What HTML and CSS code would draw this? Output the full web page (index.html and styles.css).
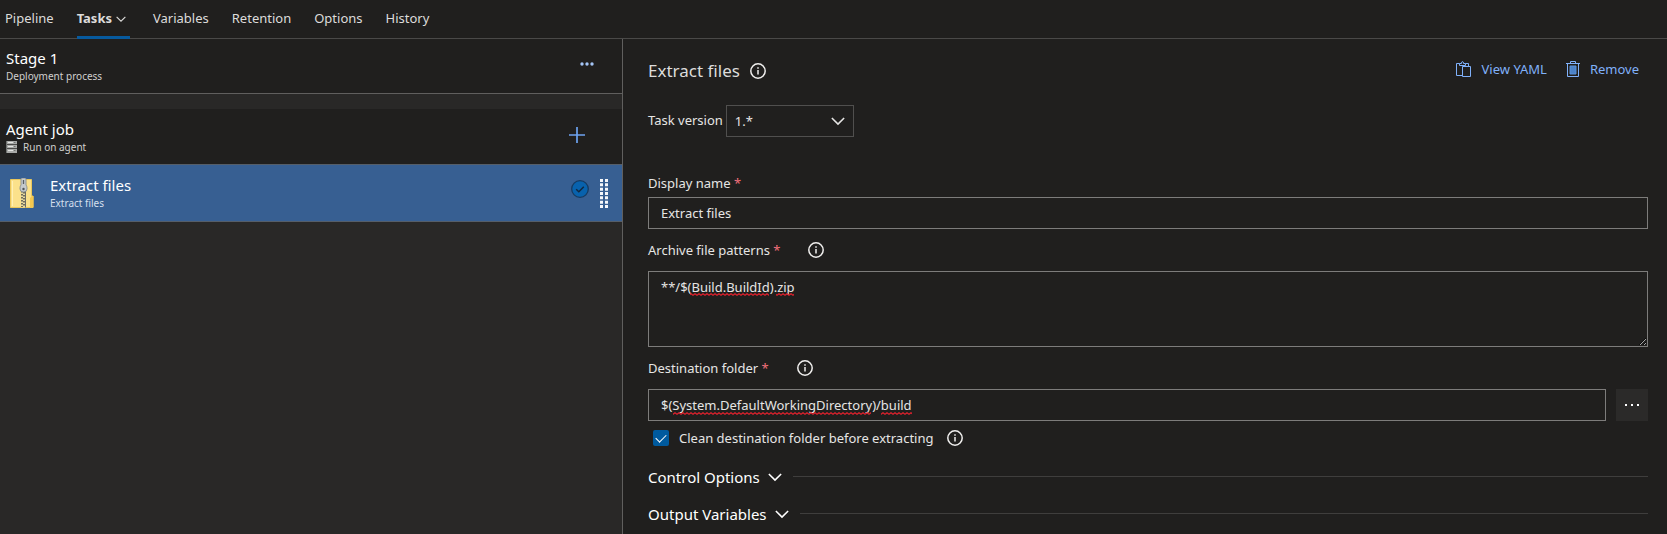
FILE: index.html
```html
<!DOCTYPE html>
<html lang="en">
<head>
<meta charset="utf-8">
<title>Release pipeline - Tasks</title>
<link rel="stylesheet" href="styles.css">
</head>
<body>
<svg class="defs" width="0" height="0" aria-hidden="true">
  <defs>
    <symbol id="chevron" viewBox="0 0 16 16"><path d="M1 4.500 8 11.500l7-7" fill="none" stroke="currentColor" stroke-width="1.8"/></symbol>
    <symbol id="info" viewBox="0 0 16 16"><circle cx="8" cy="8" r="7.2" fill="none" stroke="currentColor" stroke-width="1.5"/><path d="M8 7v4.6M8 4.3v1.5" fill="none" stroke="currentColor" stroke-width="1.5"/></symbol>
    <pattern id="wave" width="4" height="3" patternUnits="userSpaceOnUse"><path d="M-1 1.5 0 2.3 2 .7 4 2.3 5 1.5" fill="none" stroke="#e0202c" stroke-width="1.1"/></pattern>
  </defs>
</svg>
<nav class="tabs">
  <a class="tab" href="#pipeline">Pipeline</a>
  <a class="tab tab-active" href="#tasks">Tasks <svg class="tab-chevron"><use href="#chevron"/></svg></a>
  <a class="tab" href="#variables">Variables</a>
  <a class="tab" href="#retention">Retention</a>
  <a class="tab" href="#options">Options</a>
  <a class="tab" href="#history">History</a>
</nav>
<main class="workspace">
  <section class="process">
    <div class="row stage">
      <div class="row-text"><div class="row-title">Stage 1</div><div class="row-sub">Deployment process</div></div>
      <button class="icon-button more" aria-label="More actions"><svg width="14" height="4" viewBox="0 0 14 4"><g fill="#a3c4f5"><circle cx="2" cy="2" r="1.7"/><circle cx="7" cy="2" r="1.7"/><circle cx="12" cy="2" r="1.7"/></g></svg></button>
    </div>
    <div class="row job">
      <div class="row-text"><div class="row-title">Agent job</div>
        <div class="row-sub"><svg width="11" height="12" viewBox="0 0 11 12"><path d="M0 0h11v12H0z" fill="#a9aaa8"/><path d="M0 3.5h11M0 7.5h11" stroke="#4b4b49"/><path d="M2 1.5h5M2 5.5h5M2 9.5h5" stroke="#e4e5e3"/><path d="M8 1.5h1.5M8 5.5h1.5M8 9.5h1.5M.5 0v12" stroke="#707371"/></svg>Run on agent</div></div>
      <button class="icon-button add" aria-label="Add a task"><svg width="16" height="16" viewBox="0 0 16 16"><path d="M0 8h16M8 0v16" stroke="#6da3f0" stroke-width="1.7"/></svg></button>
    </div>
    <div class="row task">
      <svg class="zip" width="24" height="30" viewBox="0 0 24 30">
        <path d="M.5 1.5h21V18H23v11.500H.5z" fill="#fbe18b" stroke="#e9c65b"/>
        <path d="M2 3h1v25H2z" fill="#fff0b5"/><path d="M20 29V20l2-2h1.500v11.500z" fill="#f5c84f"/>
        <path d="M11 12h5v17.500h-5z" fill="#e8d9a0"/>
        <path d="M12 13v16M14 14v15" stroke="#5d5c50" stroke-width="1.7" stroke-dasharray="1.5 1.5"/><path d="M15.500 12.500v17" stroke="#6b6c67"/>
        <path d="M11 1q0-1 1-1h3q1 0 1 1v6q1 1 1 3v1q0 3-3.500 3T10 11v-1q0-2 1-3z" fill="#c5cacd" stroke="#7d8589" stroke-width=".8"/>
        <path d="M13.500 2v4" stroke="#596066" stroke-width="1.3"/><circle cx="13.5" cy="11" r="1.2" fill="#4f565b"/>
      </svg>
      <div class="row-text"><div class="row-title">Extract files</div><div class="row-sub">Extract files</div></div>
      <svg class="selected" width="18" height="18" viewBox="0 0 18 18"><circle cx="9" cy="9" r="8.3" fill="#0862ad" stroke="#163b62" stroke-width="1.3"/><path d="m5.200 9.300 2.600 2.400 5-5" fill="none" stroke="#12283f" stroke-width="1.5"/></svg>
      <svg class="grip" width="8" height="29" viewBox="0 0 8 29"><path d="M1.500 0v29M6.500 0v29" stroke="#f5f7fa" stroke-width="3" stroke-dasharray="3 1.33"/></svg>
    </div>
  </section>
  <form class="details">
    <header class="details-head">
      <h1 class="title">Extract files</h1><svg class="info"><use href="#info"/></svg>
      <div class="actions">
        <button type="button" class="action"><svg width="16" height="16" viewBox="0 0 16 16" fill="none" stroke="currentColor"><path d="M6.500 14.500h-6v-12h3M9.500 2.500h3v3M3.500 4.500v-2h2q0-2 1-2t1 2h2v2zM6.500 5.500h8v10h-8z"/></svg>View YAML</button>
        <button type="button" class="action"><svg width="14" height="16" viewBox="0 0 14 16" fill="none" stroke="currentColor"><path d="M0 2.500h14M4.500 2.500v-2h5v2M1.500 2.500v13h11v-13"/><path d="M4 5h6v8H4z" fill="#4b82c8" stroke="#5b91d8"/></svg>Remove</button>
      </div>
    </header>
    <div class="version">
      <label for="version">Task version</label>
      <div class="select-wrap"><select id="version"><option>1.*</option></select><svg class="select-chevron"><use href="#chevron"/></svg></div>
    </div>
    <div class="label-row"><label for="name">Display name <span class="required">*</span></label></div>
    <input class="box" id="name" type="text" value="Extract files">
    <div class="label-row label-row-area"><label for="patterns">Archive file patterns <span class="required">*</span></label><svg class="info"><use href="#info"/></svg></div>
    <div class="spelled spelled-area">
      <textarea class="box area" id="patterns" spellcheck="false">**/$(Build.BuildId).zip</textarea>
      <svg class="squiggle squiggle-area" width="140" height="3"><path d="M29 0h79v3H29zM115 0h18v3h-18z" fill="url(#wave)"/></svg>
    </div>
    <div class="label-row label-row-folder"><label for="folder">Destination folder <span class="required">*</span></label><svg class="info"><use href="#info"/></svg></div>
    <div class="folder">
      <div class="spelled">
        <input class="box" id="folder" type="text" spellcheck="false" value="$(System.DefaultWorkingDirectory)/build">
        <svg class="squiggle squiggle-line" width="270" height="3"><path d="M12 0h198v3H12zM220 0h31v3h-31z" fill="url(#wave)"/></svg>
      </div>
      <button type="button" class="browse" aria-label="Browse"><svg width="16" height="2" viewBox="0 0 16 2"><path d="M1 0h2v2H1zM7 0h2v2H7zM13 0h2v2h-2z" fill="#fff"/></svg></button>
    </div>
    <div class="check-row"><input class="check" id="clean" type="checkbox" checked><label for="clean">Clean destination folder before extracting</label><svg class="info"><use href="#info"/></svg></div>
    <button type="button" class="group">Control Options<svg class="group-chevron"><use href="#chevron"/></svg></button>
    <button type="button" class="group">Output Variables<svg class="group-chevron"><use href="#chevron"/></svg></button>
  </form>
</main>
</body>
</html>
```
FILE: styles.css
```css
* { box-sizing: border-box; }

body {
  margin: 0;
  min-height: 100vh;
  display: flex;
  flex-direction: column;
  background: #201f1e;
  color: #e6e5e4;
  color-scheme: dark;
  font: 13px/20px "Noto Sans", sans-serif;
}

button, input, select, textarea { font: inherit; color: inherit; }
button { border: 0; padding: 0; background: none; cursor: pointer; }
.defs { position: absolute; }

.tabs {
  display: flex;
  gap: 23px;
  height: 39px;
  padding-left: 5px;
  border-bottom: 1px solid #4a4948;
}
.tab {
  height: 39px;
  padding-top: 8px;
  display: flex;
  gap: 4px;
  color: #dddcdb;
  text-decoration: none;
}
.tab-active {
  padding-right: 4px;
  font-weight: 700;
  border-bottom: 3px solid #075a9e;
}
.tab-chevron { width: 10px; height: 10px; margin-top: 6px; }

.workspace {
  flex: 1;
  display: grid;
  grid-template-columns: 623px 1fr;
}

.process {
  border-right: 1px solid #605f5e;
  background: #292827;
}
.row {
  display: flex;
  align-items: center;
  height: 55px;
  padding-left: 6px;
  background: #201f1e;
}
.row-text { flex: 1; }
.row-title { font-size: 15px; line-height: 20px; color: #fff; }
.row-sub {
  display: flex;
  align-items: center;
  gap: 6px;
  font-size: 10px;
  line-height: 16px;
  color: #d0cfce;
}
.stage { border-bottom: 1px solid #605f5e; margin-bottom: 15px; }
.icon-button { display: flex; }
.more { margin: 0 28px 4px 0; }
.add { margin: 0 37px 4px 0; }
.task {
  height: 58px;
  padding-left: 10px;
  gap: 16px;
  background: #375f92;
  border: solid #555e69;
  border-width: 1px 0;
}
.task .row-sub { color: #d5dfed; }
.selected { margin-right: -5px; margin-bottom: 8px; }
.grip { margin-right: 14px; }

.details {
  display: flex;
  flex-direction: column;
  padding: 16px 19px 0 25px;
}
.info { width: 16px; height: 16px; color: #f0efee; }
.details-head { display: flex; align-items: center; gap: 10px; height: 32px; }
.title { margin: 0; font-size: 17px; line-height: 24px; font-weight: 400; color: #dddcdb; }
.actions { display: flex; gap: 19px; margin: 0 9px 5px auto; }
.action { display: flex; align-items: center; gap: 10px; color: #80b1fa; }

.version { display: flex; gap: 3px; margin-top: 18px; }
.version label { line-height: 30px; }
.select-wrap { position: relative; width: 128px; }
.select-wrap select {
  width: 100%;
  height: 32px;
  padding: 0 8px;
  appearance: none;
  border: 1px solid #504f4e;
  border-radius: 0;
  background: #201f1e;
}
.select-chevron {
  position: absolute;
  top: 9px;
  right: 9px;
  width: 14px;
  height: 14px;
  pointer-events: none;
}

.label-row { display: flex; align-items: center; gap: 28px; height: 20px; margin: 36px 0 4px; }
.label-row-area { margin: 11px 0 11px; }
.label-row-folder { margin: 11px 0 11px; }
.required { color: #f1707b; }
.box {
  display: block;
  width: 100%;
  height: 32px;
  padding: 0 12px;
  border: 1px solid #7d7c7b;
  border-radius: 0;
  background: #201f1e;
  outline: 0;
}
.area { height: 76px; padding-top: 5px; resize: vertical; }
.spelled { position: relative; flex: 1; }
.spelled-area { flex: none; }
.squiggle { position: absolute; left: 13px; pointer-events: none; }
.squiggle-area { top: 22px; }
.squiggle-line { top: 23px; }
.folder { display: flex; gap: 10px; }
.browse {
  display: flex;
  align-items: center;
  justify-content: center;
  width: 32px;
  height: 32px;
  background: #2b2a29;
}

.check-row { display: flex; align-items: center; gap: 10px; margin: 7px 0 0 5px; }
.check-row .info { margin-left: 4px; }
.check {
  position: relative;
  width: 16px;
  height: 16px;
  margin: 0;
  appearance: none;
  border-radius: 2px;
  background: #005a9e;
}
.check:checked::after {
  content: "";
  position: absolute;
  left: 5px;
  top: 2px;
  width: 5px;
  height: 9px;
  border: solid #fff;
  border-width: 0 1px 1px 0;
  transform: rotate(45deg);
}

.group {
  display: flex;
  align-items: center;
  gap: 8px;
  height: 21px;
  margin-top: 16px;
  font-size: 15px;
  color: #fff;
}
.check-row + .group { margin-top: 18px; }
.group-chevron { width: 14px; height: 14px; margin-right: 3px; }
.group::after { content: ""; flex: 1; border-top: 1px solid #3f3e3d; }
```
